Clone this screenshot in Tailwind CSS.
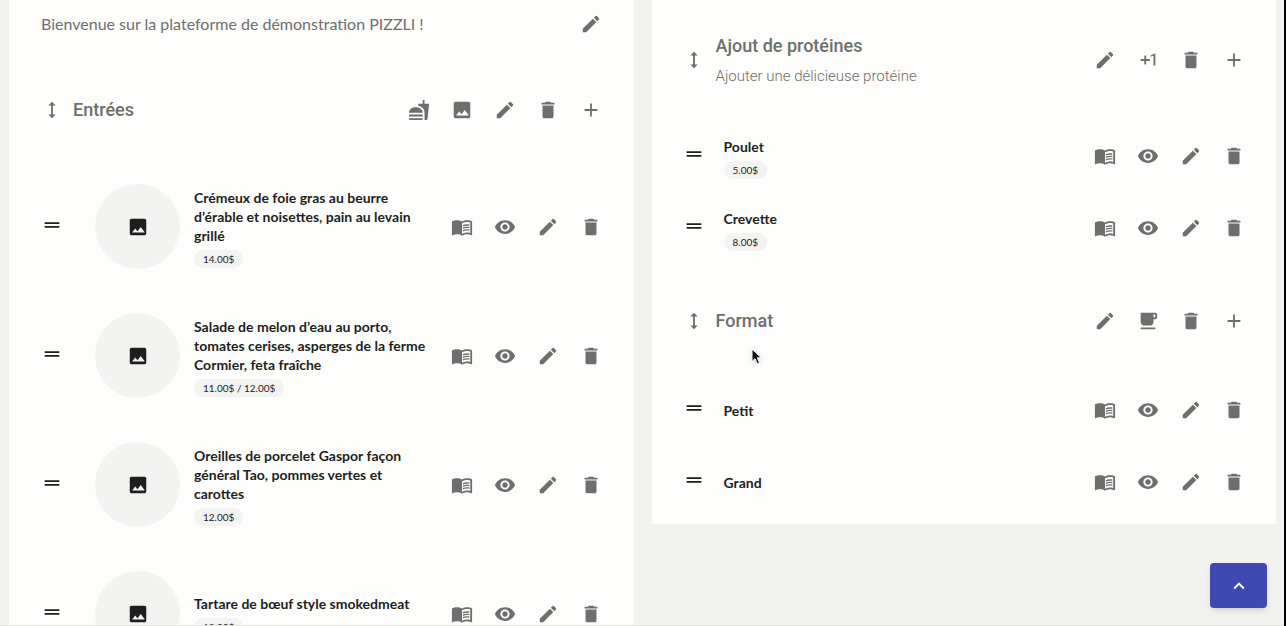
<!DOCTYPE html>
<html lang="fr">
  <head>
    <meta charset="UTF-8" />
    <meta name="viewport" content="width=device-width, initial-scale=1.0" />
    <title>PIZZLI - Menu</title>
    <script src="https://cdn.jsdelivr.net/npm/@tailwindcss/browser@4"></script>
  </head>
  <body class="bg-[#f2f2f1] font-['Lato',sans-serif] text-[#1d1f1d]">
    <!-- Icon set -->
    <svg class="hidden">
      <symbol id="height" viewBox="0 0 24 24">
        <path d="M13 6.99h3L12 3 8 6.99h3v10.02H8L12 21l4-3.99h-3z" />
      </symbol>
      <symbol id="drag" viewBox="0 0 24 24">
        <path d="M20 9H4v2h16V9zM4 15h16v-2H4v2z" />
      </symbol>
      <symbol id="edit" viewBox="0 0 24 24">
        <path d="M3 17.25V21h3.75L17.81 9.94l-3.75-3.75L3 17.25zM20.71 7.04c.39-.39.39-1.02 0-1.41l-2.34-2.34a.9959.9959 0 0 0-1.41 0l-1.83 1.83 3.75 3.75 1.83-1.83z" />
      </symbol>
      <symbol id="delete" viewBox="0 0 24 24">
        <path d="M6 19c0 1.1.9 2 2 2h8c1.1 0 2-.9 2-2V7H6v12zM19 4h-3.5l-1-1h-5l-1 1H5v2h14V4z" />
      </symbol>
      <symbol id="add" viewBox="0 0 24 24">
        <path d="M19 13h-6v6h-2v-6H5v-2h6V5h2v6h6v2z" />
      </symbol>
      <symbol id="image" viewBox="0 0 24 24">
        <path d="M21 19V5c0-1.1-.9-2-2-2H5c-1.1 0-2 .9-2 2v14c0 1.1.9 2 2 2h14c1.1 0 2-.9 2-2zM5.500 18l3.500-4.500 2.500 3.010L15 12l4.500 6H5.500z" />
      </symbol>
      <symbol id="eye" viewBox="0 0 24 24">
        <path d="M12 4.500C7 4.500 2.730 7.610 1 12c1.730 4.390 6 7.500 11 7.500s9.270-3.110 11-7.500c-1.730-4.390-6-7.500-11-7.500zM12 17c-2.760 0-5-2.240-5-5s2.240-5 5-5 5 2.240 5 5-2.240 5-5 5zm0-8c-1.660 0-3 1.340-3 3s1.340 3 3 3 3-1.340 3-3-1.340-3-3-3z" />
      </symbol>
      <symbol id="book" viewBox="0 0 24 24">
        <path d="M21 5c-1.110-.35-2.330-.5-3.500-.5-1.950 0-4.050.4-5.500 1.500-1.450-1.100-3.550-1.500-5.500-1.500S2.450 4.900 1 6v14.650c0 .25.25.5.5.5.1 0 .15-.05.25-.05C3.100 20.450 5.050 20 6.500 20c1.950 0 4.050.4 5.500 1.500 1.350-.85 3.800-1.500 5.500-1.500 1.650 0 3.350.3 4.750 1.050.1.05.15.05.25.05.25 0 .5-.25.5-.5V6c-.6-.45-1.250-.75-2-1zm0 13.500c-1.100-.35-2.300-.5-3.500-.5-1.700 0-4.150.65-5.500 1.500V8c1.350-.85 3.800-1.500 5.500-1.500 1.200 0 2.400.15 3.500.5v11.500z" />
        <path d="M17.500 10.500c.88 0 1.730.09 2.500.26V9.240c-.79-.15-1.640-.24-2.500-.24-1.700 0-3.240.29-4.500.83v1.660c1.130-.64 2.700-.99 4.500-.99zM13 12.490v1.660c1.130-.64 2.700-.99 4.500-.99.88 0 1.730.09 2.500.26V11.900c-.79-.15-1.640-.24-2.500-.24-1.700 0-3.240.3-4.500.83zM17.500 14.330c-1.700 0-3.240.29-4.500.83v1.660c1.130-.64 2.700-.99 4.500-.99.88 0 1.730.09 2.500.26v-1.520c-.79-.16-1.640-.24-2.500-.24z" />
      </symbol>
      <symbol id="fastfood" viewBox="0 0 24 24">
        <path d="M18.060 22.990h1.660c.84 0 1.530-.64 1.630-1.460L23 5.050h-5V1h-1.970v4.050h-4.970l.3 2.340c1.710.47 3.310 1.320 4.270 2.260 1.440 1.420 2.430 2.890 2.430 5.290v8.050zM1 21.990V21h15.030v.99c0 .55-.45 1-1.010 1H2.010c-.56 0-1.010-.45-1.010-1zm15.030-7c0-8-15.030-8-15.030 0h15.030zM1.020 17h15v2h-15z" />
      </symbol>
      <symbol id="plusone" viewBox="0 0 24 24">
        <path d="M10 7H8v4H4v2h4v4h2v-4h4v-2h-4V7zm10 11h-2V7.380L15 8.400V6.700L19.700 5h.3v13z" />
      </symbol>
      <symbol id="cup" viewBox="0 0 24 24">
        <path d="M20 3H4v10c0 2.210 1.790 4 4 4h6c2.210 0 4-1.790 4-4v-3h2c1.110 0 2-.9 2-2V5c0-1.110-.89-2-2-2zm0 5h-2V5h2v3zM4 19h16v2H4z" />
      </symbol>
      <symbol id="up" viewBox="0 0 24 24">
        <path d="M12 8l-6 6 1.410 1.410L12 10.830l4.590 4.580L18 14z" />
      </symbol>
    </svg>

    <div class="h-screen overflow-hidden border-r-2 border-black">
      <main class="grid grid-cols-2 items-start gap-[18px] pl-[9px] pr-2">
        <section class="bg-[#fdfdfc] pb-6 pr-[21px]">
          <div class="flex h-12 items-center pl-8">
            <p class="flex-1 text-base text-[#6d6f6c]">
              Bienvenue sur la plateforme de démonstration PIZZLI !
            </p>
            <div class="flex" data-actions="edit"></div>
          </div>

          <header class="mt-2 flex h-[107px] items-center pl-[21px]">
            <div data-handle="height"></div>
            <h2 class="flex-1 font-[Roboto] text-lg font-medium text-[#6d6f6c]">Entrées</h2>
            <div class="flex" data-actions="fastfood image edit delete add"></div>
          </header>
          <ul id="starters" class="-mt-px"></ul>
        </section>

        <section class="bg-[#fdfdfc] pb-[6px] pr-[21px]">
          <header class="flex h-[120px] items-center pl-[21px]">
            <div data-handle="height"></div>
            <div class="flex-1 font-[Roboto] text-[#6d6f6c]">
              <h2 class="text-lg font-medium leading-8">Ajout de protéines</h2>
              <p class="text-[15px] font-light leading-7">Ajouter une délicieuse protéine</p>
            </div>
            <div class="flex" data-actions="edit plusone delete add"></div>
          </header>
          <ul id="proteins"></ul>

          <header class="mt-1 flex h-[106px] items-center pl-[21px]">
            <div data-handle="height"></div>
            <h2 class="flex-1 font-[Roboto] text-lg font-medium text-[#6d6f6c]">Format</h2>
            <div class="flex" data-actions="edit cup delete add"></div>
          </header>
          <ul id="formats"></ul>
        </section>
      </main>
    </div>

    <button
      type="button"
      aria-label="Haut de page"
      class="fixed bottom-[18px] right-[19px] flex h-[45px] w-[57px] items-center justify-center rounded bg-[#3f49b0] text-white shadow-md"
    >
      <svg class="size-[22px] fill-current"><use href="#up" /></svg>
    </button>
    <div class="fixed bottom-0 left-0 right-[2px] h-px bg-[#e4e4e3]"></div>

    <!-- Mouse pointer -->
    <svg class="fixed left-[750px] top-[348px] h-[18px] w-3 drop-shadow-sm" viewBox="0 0 12 18">
      <path d="M2 1v12.500l3-2.800 2.200 5 2.300-1-2.200-4.900h4z" fill="#111" stroke="#fff" />
    </svg>

    <script>
      const labels = {
        edit: "Modifier",
        delete: "Supprimer",
        add: "Ajouter",
        image: "Image",
        eye: "Visibilité",
        book: "Menu",
        fastfood: "Repas",
        plusone: "Supplément",
        cup: "Boisson",
        height: "Déplacer la section",
        drag: "Déplacer",
      };

      const starters = [
        ["Crémeux de foie gras au beurre d’érable et noisettes, pain au levain grillé", "14.00$"],
        ["Salade de melon d’eau au porto, tomates cerises, asperges de la ferme Cormier, feta fraîche", "11.00$ / 12.00$"],
        ["Oreilles de porcelet Gaspor façon général Tao, pommes vertes et carottes", "12.00$"],
        ["Tartare de bœuf style smokedmeat", "18.00$"],
      ];
      const proteins = [
        ["Poulet", "5.00$"],
        ["Crevette", "8.00$"],
      ];
      const formats = [["Petit"], ["Grand"]];

      function icon(name) {
        return `<svg class="size-[22px] fill-current"><use href="#${name}" /></svg>`;
      }

      function actions(names) {
        return names
          .split(" ")
          .map(
            (name) =>
              `<button type="button" aria-label="${labels[name]}" class="flex size-[43px] items-center justify-center text-[#6d6f6c]">${icon(name)}</button>`
          )
          .join("");
      }

      function handle() {
        return `<button type="button" aria-label="${labels.drag}" class="flex w-[43px] shrink-0 cursor-move justify-center pb-1">${icon("drag")}</button>`;
      }

      function text([name, price]) {
        if (!price) {
          return `<h3 class="text-[14px] font-bold leading-[19px]">${name}</h3>`;
        }
        return `
          <div class="pt-[3px]">
            <h3 class="text-[14px] font-bold leading-[19px]">${name}</h3>
            <span class="mt-[5px] block w-fit rounded-full bg-[#f3f3f2] px-[9px] text-[10px] leading-[18px]">${price}</span>
          </div>`;
      }

      function starterRow(item) {
        return `
          <li class="flex h-[129px] items-center pl-[21px]">
            ${handle()}
            <button type="button" aria-label="${labels.image}" class="ml-[22px] flex size-[85px] shrink-0 items-center justify-center rounded-full bg-[#f3f3f2]">${icon("image")}</button>
            <div class="flex-1 pl-[14px] pr-2">${text(item)}</div>
            <div class="flex">${actions("book eye edit delete")}</div>
          </li>`;
      }

      function optionRow(item) {
        return `
          <li class="flex h-[72px] items-center pl-[21px]">
            ${handle()}
            <div class="flex-1 pl-2">${text(item)}</div>
            <div class="flex">${actions("book eye edit delete")}</div>
          </li>`;
      }

      document.querySelectorAll("[data-actions]").forEach((el) => {
        el.innerHTML = actions(el.dataset.actions);
      });
      document.querySelectorAll("[data-handle]").forEach((el) => {
        el.innerHTML = `<button type="button" aria-label="${labels.height}" class="flex w-[43px] cursor-move justify-center text-[#6d6f6c]">${icon("height")}</button>`;
      });
      document.getElementById("starters").innerHTML = starters.map(starterRow).join("");
      document.getElementById("proteins").innerHTML = proteins.map(optionRow).join("");
      document.getElementById("formats").innerHTML = formats.map(optionRow).join("");
    </script>
  </body>
</html>
